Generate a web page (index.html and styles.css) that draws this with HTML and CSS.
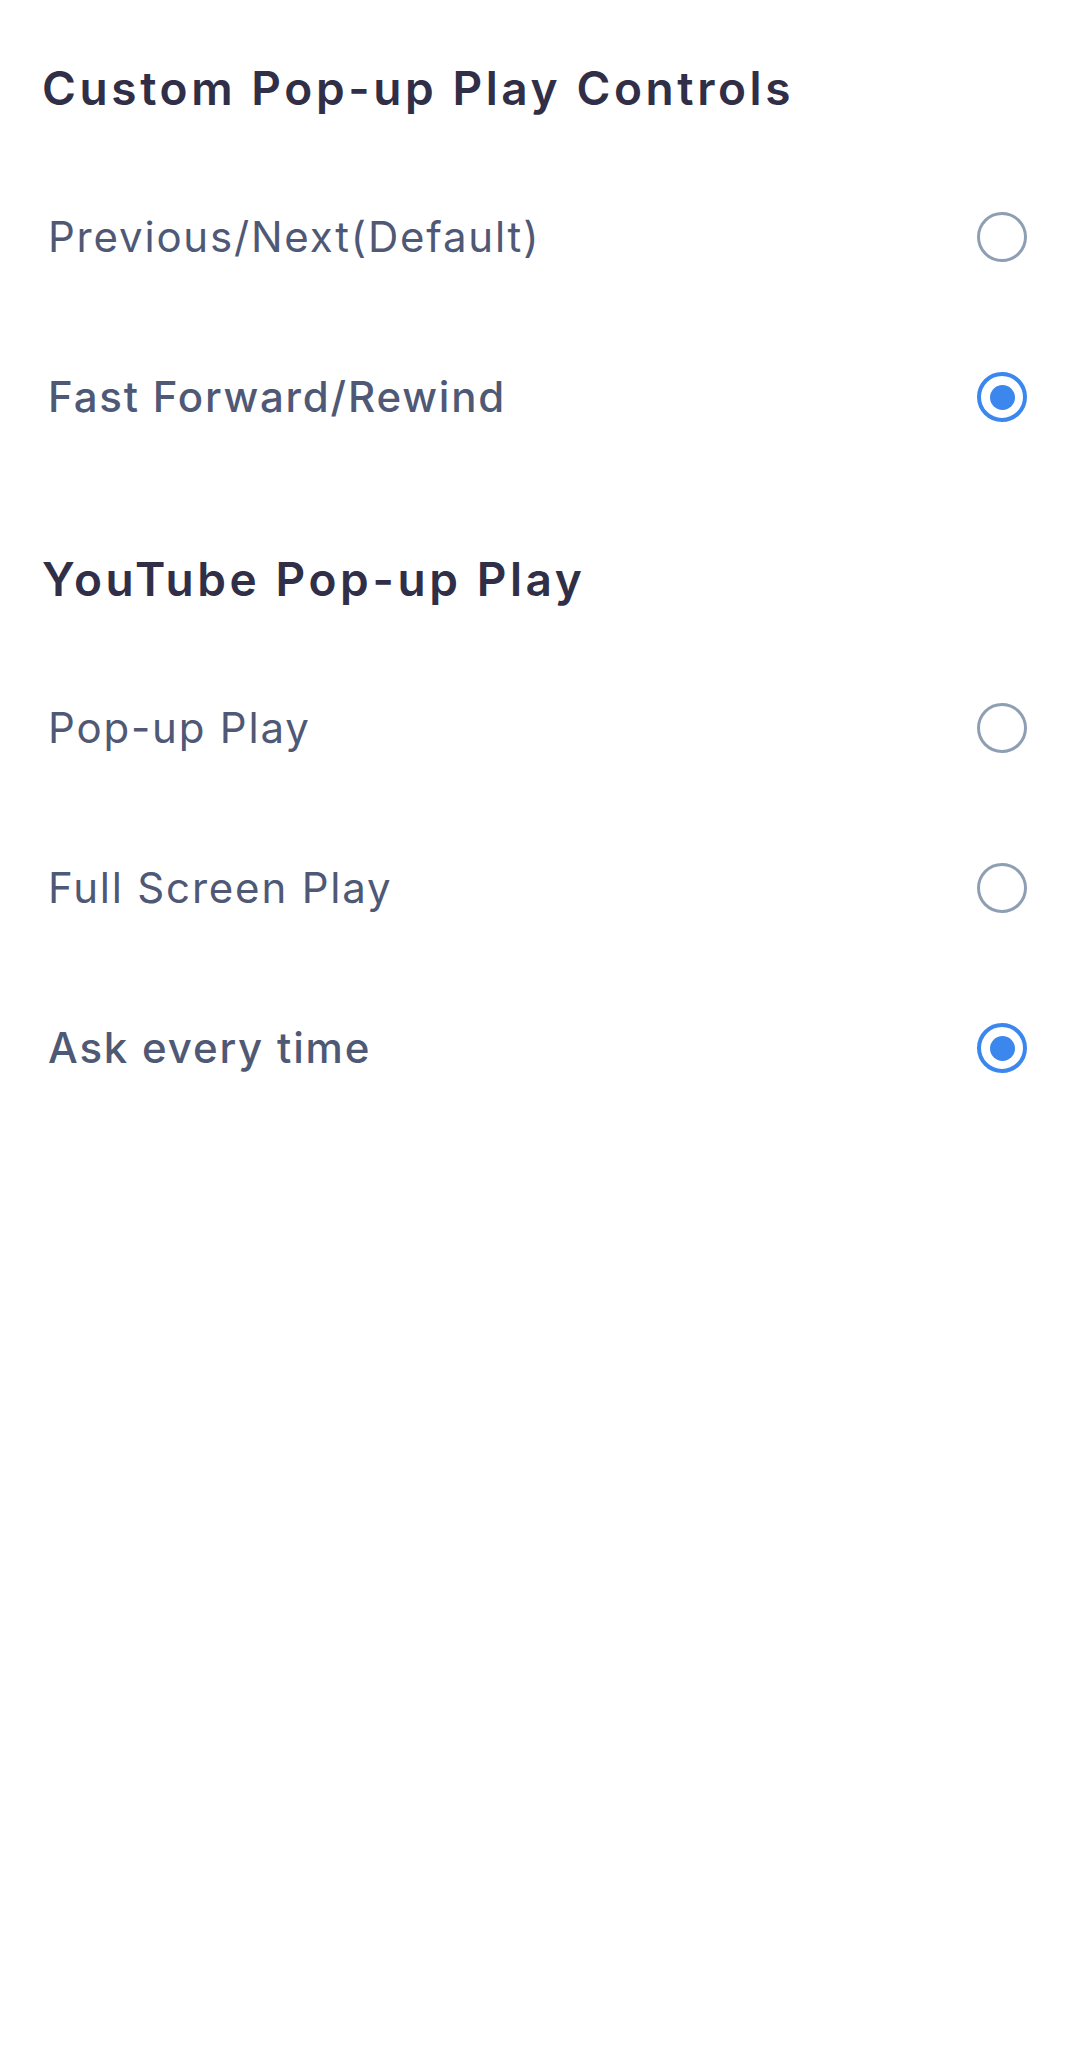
FILE: index.html
```html
<!DOCTYPE html>
<html lang="en">
<head>
<meta charset="utf-8">
<title>Pop-up Play Settings</title>
<link rel="stylesheet" href="styles.css">
</head>
<body>
<main class="page">
  <section class="section section-first">
    <h2 class="section-title">Custom Pop-up Play Controls</h2>
    <ul class="options">
      <li class="option">
        <span class="option-label">Previous/Next(Default)</span>
        <span class="radio"></span>
      </li>
      <li class="option option-selected">
        <span class="option-label">Fast Forward/Rewind</span>
        <span class="radio radio-checked"><span class="radio-dot"></span></span>
      </li>
    </ul>
  </section>
  <section class="section section-second">
    <h2 class="section-title">YouTube Pop-up Play</h2>
    <ul class="options">
      <li class="option">
        <span class="option-label">Pop-up Play</span>
        <span class="radio"></span>
      </li>
      <li class="option">
        <span class="option-label">Full Screen Play</span>
        <span class="radio"></span>
      </li>
      <li class="option option-selected">
        <span class="option-label">Ask every time</span>
        <span class="radio radio-checked"><span class="radio-dot"></span></span>
      </li>
    </ul>
  </section>
</main>
</body>
</html>
```

FILE: styles.css
```css
html, body {
  margin: 0;
  padding: 0;
  background: #ffffff;
}

body {
  font-family: Inter, Roboto, "Noto Sans", "Liberation Sans", sans-serif;
  width: 1080px;
  min-height: 2059px;
}

.page {
  display: flex;
  flex-direction: column;
}

.section-first {
  padding-top: 58px;
}

.section-second {
  padding-top: 72px;
}

.section-title {
  margin: 0 0 39px 0;
  padding-left: 42px;
  font-size: 46px;
  line-height: 60px;
  height: 60px;
  font-weight: 600;
  color: #302f47;
  letter-spacing: 3.6px;
  white-space: nowrap;
}

.options {
  list-style: none;
  margin: 0;
  padding: 0;
}

.option {
  height: 160px;
  display: flex;
  align-items: center;
  justify-content: space-between;
  padding: 0 53px 0 48px;
}

.option-label {
  font-size: 42px;
  line-height: 50px;
  font-weight: 400;
  color: #4f5976;
  letter-spacing: 1.8px;
  white-space: nowrap;
}

.option-selected .option-label {
  font-weight: 500;
  letter-spacing: 1.8px;
}

.radio {
  width: 50px;
  height: 50px;
  box-sizing: border-box;
  border-radius: 50%;
  border: 3.5px solid #8e9fb4;
  display: flex;
  align-items: center;
  justify-content: center;
  flex: none;
}

.radio-checked {
  border: 4px solid #3b87ee;
}

.radio-dot {
  width: 25px;
  height: 25px;
  border-radius: 50%;
  background: #3b87ee;
}
```
